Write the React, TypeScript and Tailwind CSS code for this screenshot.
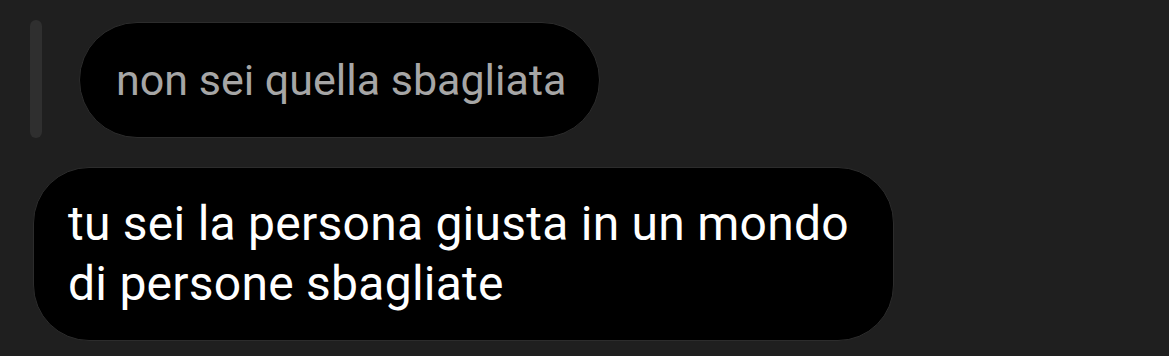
import React from 'react';

const App: React.FC = () => {
  return (
    <div
      className="w-[1169px] h-[356px] overflow-hidden bg-[#1f1f1f]"
      style={{ fontFamily: 'Roboto, "Liberation Sans", sans-serif' }}
    >
      <div className="flex items-start pt-[20px] pl-[30px]">
        <div className="w-[12px] h-[118px] rounded-full bg-[#2f2f2f]" />
        <div className="ml-[37px] mt-[2px] flex items-center w-[521px] h-[116px] rounded-full bg-black border border-[#2c2c2c] pl-[36px]">
          <span className="text-[43px] leading-none text-[#a6a6a6]">non sei quella sbagliata</span>
        </div>
      </div>

      <div className="ml-[33px] mt-[29px] w-[861px] h-[174px] flex items-center rounded-[56px] bg-black border border-[#2c2c2c] pl-[34px]">
        <p className="text-[48px] leading-[60px] text-white tracking-[0.25px]">
          tu sei la persona giusta in un mondo
          <br />
          di persone sbagliate
        </p>
      </div>
    </div>
  );
};

export default App;
